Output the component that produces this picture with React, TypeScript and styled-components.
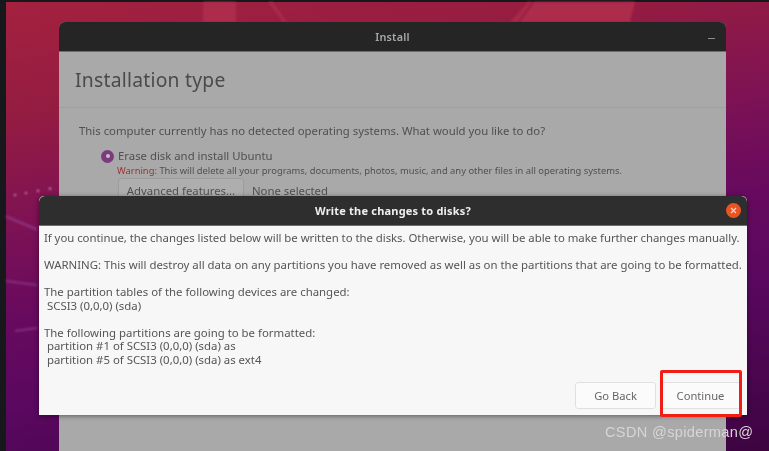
import React, { FunctionComponent } from 'react';
import styled, { createGlobalStyle } from 'styled-components';

const GlobalStyle = createGlobalStyle`
    html, body {
        margin: 0;
        padding: 0;
        background: #16181b;
    }
`;

const Screen = styled.div`
    position: relative;
    width: 769px;
    height: 451px;
    overflow: hidden;
    background: #16181b;
    font-family: 'Noto Sans', 'Open Sans', sans-serif;
`;

const Desktop = styled.div`
    position: absolute;
    left: 6px;
    top: 2px;
    width: 763px;
    height: 449px;
    background: linear-gradient(170deg, #a4213f 0%, #941c42 20%, #7e1254 38%, #680a5e 54%, #5a0860 70%, #3d0440 100%);
`;

const Wallpaper = styled.svg`
    position: absolute;
    left: 0;
    top: 0;
    filter: blur(0.8px);
`;

const InstallerWindow = styled.div`
    position: absolute;
    left: 53px;
    top: 20px;
    width: 667px;
    height: 429px;
    display: flex;
    flex-direction: column;
    background: #a9a9a9;
    border-radius: 6px 6px 0 0;
`;

const TitleBar = styled.div<{ $height: number; $bg: string }>`
    position: relative;
    flex: none;
    height: ${p => p.$height}px;
    display: flex;
    align-items: center;
    justify-content: center;
    background: ${p => p.$bg};
    border-radius: 6px 6px 0 0;
    border-bottom: 1px solid #6e6e6e;
    box-sizing: border-box;
`;

const InstallTitle = styled.span`
    font-size: 10.8px;
    font-weight: 600;
    letter-spacing: 0.2px;
    color: #a8a8a8;
    filter: blur(0.5px);
`;

const Minimize = styled.span`
    position: absolute;
    right: 11px;
    top: 16px;
    width: 7px;
    height: 1px;
    background: #8c8c8c;
`;

const Header = styled.div`
    flex: none;
    height: 55px;
    padding: 0 16px;
    display: flex;
    align-items: center;
    border-bottom: 1px solid #a0a0a0;
    box-sizing: content-box;
`;

const Heading = styled.h1`
    margin: 0;
    font-size: 19.3px;
    font-weight: 400;
    letter-spacing: 0.25px;
    color: #4a4a4a;
    filter: blur(0.55px);
`;

const InstallerBody = styled.div`
    padding: 15px 20px;
    color: #505050;
    filter: blur(0.55px);
`;

const Question = styled.div`
    font-size: 11.35px;
    line-height: 16px;
    white-space: nowrap;
`;

const OptionRow = styled.div`
    margin-top: 9px;
    margin-left: 22px;
    display: flex;
    align-items: center;
    gap: 4px;
    font-size: 11.35px;
    line-height: 16px;
`;

const Radio = styled.span`
    width: 13px;
    height: 13px;
    border-radius: 50%;
    background: #7d3b7f;
    display: flex;
    align-items: center;
    justify-content: center;

    &::after {
        content: '';
        width: 4px;
        height: 4px;
        border-radius: 50%;
        background: #c8c0c8;
    }
`;

const WarningLine = styled.div`
    margin-left: 38px;
    margin-top: 1px;
    font-size: 9.4px;
    line-height: 12px;
    white-space: nowrap;
`;

const WarningLabel = styled.span`
    color: #9c3434;
`;

const FeatureRow = styled.div`
    margin-left: 39px;
    margin-top: 1px;
    display: flex;
    align-items: center;
    gap: 8px;
    font-size: 11.35px;
`;

const FeatureButton = styled.div`
    width: 126px;
    height: 24px;
    box-sizing: border-box;
    border: 1px solid #9c9c9c;
    border-radius: 3px;
    background: #aeaeae;
    text-align: center;
    line-height: 24px;
`;

const Dialog = styled.div`
    position: absolute;
    left: 33px;
    top: 194px;
    width: 708px;
    height: 219px;
    display: flex;
    flex-direction: column;
    border-radius: 5px 5px 0 0;
    background: #f7f7f7;
    box-shadow: 0 1px 5px rgba(0, 0, 0, 0.45);
`;

const DialogTitle = styled.span`
    font-size: 11px;
    font-weight: 700;
    letter-spacing: 0.2px;
    color: #efefef;
    filter: blur(0.4px);
`;

const CloseButton = styled.span`
    position: absolute;
    right: 6px;
    top: 7px;
    width: 15px;
    height: 15px;
    border-radius: 50%;
    background: #e95420;
    display: flex;
    align-items: center;
    justify-content: center;
`;

const DialogBody = styled.div`
    flex: 1;
    display: flex;
    flex-direction: column;
    padding: 5px 5px 0;
    color: #555;
    font-size: 11.4px;
    line-height: 13.6px;
    filter: blur(0.5px);
`;

const Paragraph = styled.p<{ $tight?: boolean }>`
    margin: 0 0 13.4px;
    white-space: pre;
    letter-spacing: ${p => (p.$tight ? '-0.04px' : 'normal')};
`;

const Buttons = styled.div`
    flex: none;
    display: flex;
    justify-content: flex-end;
    gap: 4px;
    padding: 0 6px 6px 0;
`;

const ActionButton = styled.div`
    width: 81px;
    height: 27px;
    box-sizing: border-box;
    border: 1px solid #e0e0e0;
    border-radius: 3px;
    background: #fbfbfb;
    display: flex;
    align-items: center;
    justify-content: center;
    font-size: 11.2px;
    color: #666;
    filter: blur(0.5px);
`;

const Highlight = styled.div`
    position: absolute;
    left: 660px;
    top: 370px;
    width: 82px;
    height: 47px;
    box-sizing: border-box;
    border: 3px solid #f01e14;
    border-radius: 2px;
`;

const Watermark = styled.div`
    position: absolute;
    left: 605px;
    top: 424px;
    font-family: 'Liberation Sans', Arial, sans-serif;
    font-size: 14.6px;
    letter-spacing: 0.32px;
    color: #d8d4d8;
    filter: blur(0.3px);
`;

export const App: FunctionComponent = () => (
    <Screen>
        <GlobalStyle />
        <Desktop>
            <Wallpaper width="763" height="449" viewBox="0 0 763 449">
                <polygon points="197,0 230,0 230,20 197,20" fill="#ad2c4b" />
                <polygon points="262,0 267,0 281,20 277,20" fill="#a92a48" />
                <polygon points="504,20 522,0 526,0 512,20" fill="#a92a48" />
                <polygon points="528,0 629,0 624,20 514,20" fill="#ad2c4b" />
                <polygon points="0,213 31,226 31,229 0,216" fill="#8f2f7a" />
                <polygon points="0,278 31,282 31,284 0,280" fill="#853080" />
                <polygon points="9,328 31,325 31,327 9,330" fill="#853080" />
                {[9, 20, 32, 44].map(x => (
                    <circle key={x} cx={x} cy={193 - (x - 9) * 0.18} r="1.1" fill="#d9a8cc" />
                ))}
            </Wallpaper>
            <InstallerWindow>
                <TitleBar $height={30} $bg="#262525">
                    <InstallTitle>Install</InstallTitle>
                    <Minimize />
                </TitleBar>
                <Header>
                    <Heading>Installation type</Heading>
                </Header>
                <InstallerBody>
                    <Question>
                        This computer currently has no detected operating systems. What would you like to do?
                    </Question>
                    <OptionRow>
                        <Radio />
                        Erase disk and install Ubuntu
                    </OptionRow>
                    <WarningLine>
                        <WarningLabel>Warning:</WarningLabel> This will delete all your programs, documents, photos, music, and any other files in all operating systems.
                    </WarningLine>
                    <FeatureRow>
                        <FeatureButton>Advanced features...</FeatureButton>
                        None selected
                    </FeatureRow>
                </InstallerBody>
            </InstallerWindow>
            <Dialog>
                <TitleBar $height={30} $bg="#2f2e2e">
                    <DialogTitle>Write the changes to disks?</DialogTitle>
                    <CloseButton>
                        <svg width="7" height="7" viewBox="0 0 7 7">
                            <path d="M1 1L6 6M6 1L1 6" stroke="#f6d9cc" strokeWidth="1.2" />
                        </svg>
                    </CloseButton>
                </TitleBar>
                <DialogBody>
                    <Paragraph $tight>If you continue, the changes listed below will be written to the disks. Otherwise, you will be able to make further changes manually.</Paragraph>
                    <Paragraph>WARNING: This will destroy all data on any partitions you have removed as well as on the partitions that are going to be formatted.</Paragraph>
                    <Paragraph>{'The partition tables of the following devices are changed:\n SCSI3 (0,0,0) (sda)'}</Paragraph>
                    <Paragraph>{'The following partitions are going to be formatted:\n partition #1 of SCSI3 (0,0,0) (sda) as\n partition #5 of SCSI3 (0,0,0) (sda) as ext4'}</Paragraph>
                </DialogBody>
                <Buttons>
                    <ActionButton>Go Back</ActionButton>
                    <ActionButton>Continue</ActionButton>
                </Buttons>
            </Dialog>
        </Desktop>
        <Highlight />
        <Watermark>CSDN @spiderman@</Watermark>
    </Screen>
);

export default App;
